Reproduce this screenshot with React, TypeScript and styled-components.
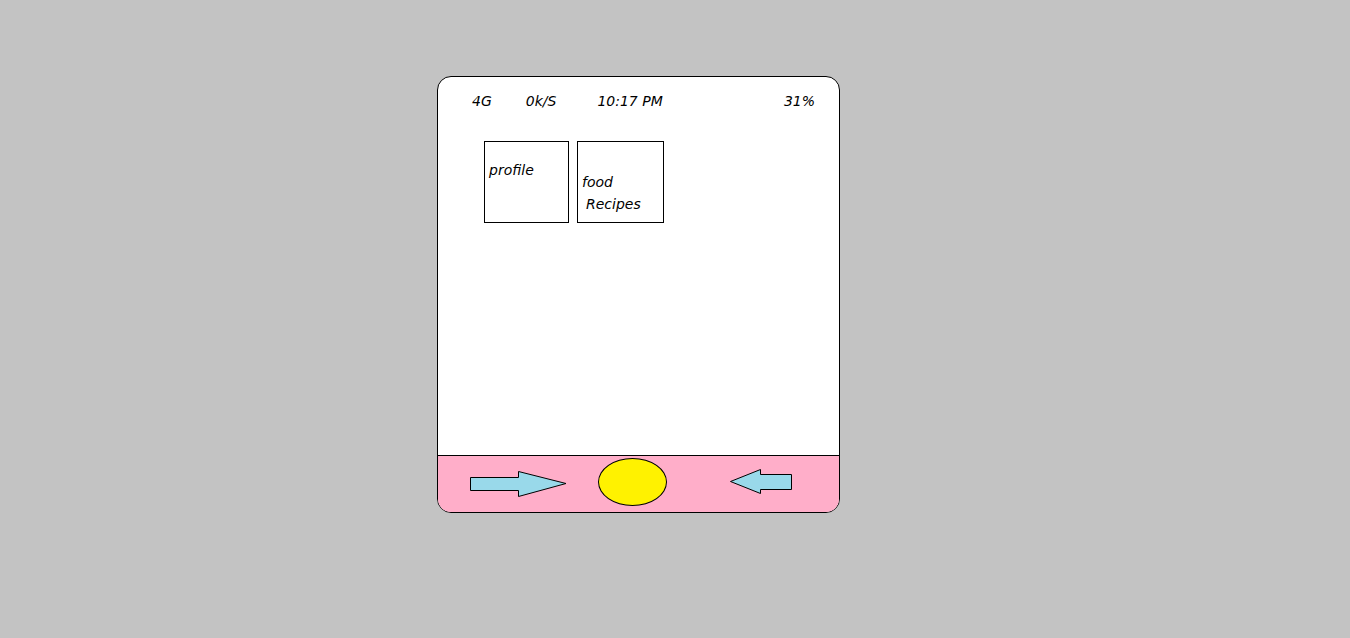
import styled, { createGlobalStyle } from "styled-components";

const GlobalStyle = createGlobalStyle`
  body {
    margin: 0;
    background: #c3c3c3;
    font-family: "DejaVu Sans", "Liberation Sans", sans-serif;
  }
`;

const Page = styled.div`
  min-height: 638px;
  padding: 76px 0 0 437px;
  box-sizing: border-box;
`;

const Phone = styled.div`
  box-sizing: border-box;
  width: 403px;
  height: 437px;
  border: 1px solid #000;
  border-radius: 14px;
  background: #fff;
  overflow: hidden;
  display: flex;
  flex-direction: column;
`;

const StatusBar = styled.div`
  display: flex;
  align-items: center;
  height: 16px;
  padding: 16px 24px 0 34px;
  font-size: 14px;
  font-style: italic;
  color: #000;
`;

const StatusItem = styled.span<{ $gap?: number }>`
  margin-right: ${(p) => p.$gap ?? 0}px;
  line-height: 16px;
  white-space: nowrap;
`;

const Spacer = styled.div`
  flex: 1;
`;

const Content = styled.div`
  flex: 1;
  display: flex;
  align-items: flex-start;
  gap: 8px;
  padding: 32px 0 0 46px;
`;

const Tile = styled.div<{ $width: number; $padTop: number; $padLeft: number }>`
  box-sizing: border-box;
  width: ${(p) => p.$width}px;
  height: 82px;
  border: 1px solid #000;
  padding: ${(p) => p.$padTop}px 0 0 ${(p) => p.$padLeft}px;
  font-size: 14px;
  font-style: italic;
  line-height: 22px;
`;

const TileLine = styled.div<{ $indent?: number }>`
  padding-left: ${(p) => p.$indent ?? 0}px;
`;

const NavBar = styled.div`
  height: 56px;
  border-top: 1px solid #000;
  background: #ffaec9;
  display: flex;
  align-items: center;
  padding-left: 32px;
`;

const Oval = styled.div`
  box-sizing: border-box;
  width: 69px;
  height: 48px;
  border: 1px solid #000;
  border-radius: 50%;
  background: #fff200;
  margin: 0 63px 4px 31px;
`;

function RightArrow() {
  return (
    <svg width="97" height="27" viewBox="0 0 97 27">
      <polygon
        points="0.5,6.5 48.5,6.5 48.5,0.5 96,12.5 48.5,25.5 48.5,19.5 0.5,19.5"
        fill="#99d9ea"
        stroke="#000"
        strokeWidth="1"
      />
    </svg>
  );
}

function LeftArrow() {
  return (
    <svg width="62" height="26" viewBox="0 0 62 26" style={{ marginBottom: 4 }}>
      <polygon
        points="0.5,12.5 30.5,0.5 30.5,5.5 61.5,5.5 61.5,20.5 30.5,20.5 30.5,24.5"
        fill="#99d9ea"
        stroke="#000"
        strokeWidth="1"
      />
    </svg>
  );
}

export default function App() {
  return (
    <>
      <GlobalStyle />
      <Page>
        <Phone>
          <StatusBar>
            <StatusItem $gap={34}>4G</StatusItem>
            <StatusItem $gap={41}>0k/S</StatusItem>
            <StatusItem>10:17 PM</StatusItem>
            <Spacer />
            <StatusItem>31%</StatusItem>
          </StatusBar>
          <Content>
            <Tile $width={85} $padTop={17} $padLeft={4}>
              <TileLine>profile</TileLine>
            </Tile>
            <Tile $width={87} $padTop={29} $padLeft={4}>
              <TileLine>food</TileLine>
              <TileLine $indent={4}>Recipes</TileLine>
            </Tile>
          </Content>
          <NavBar>
            <RightArrow />
            <Oval />
            <LeftArrow />
          </NavBar>
        </Phone>
      </Page>
    </>
  );
}
